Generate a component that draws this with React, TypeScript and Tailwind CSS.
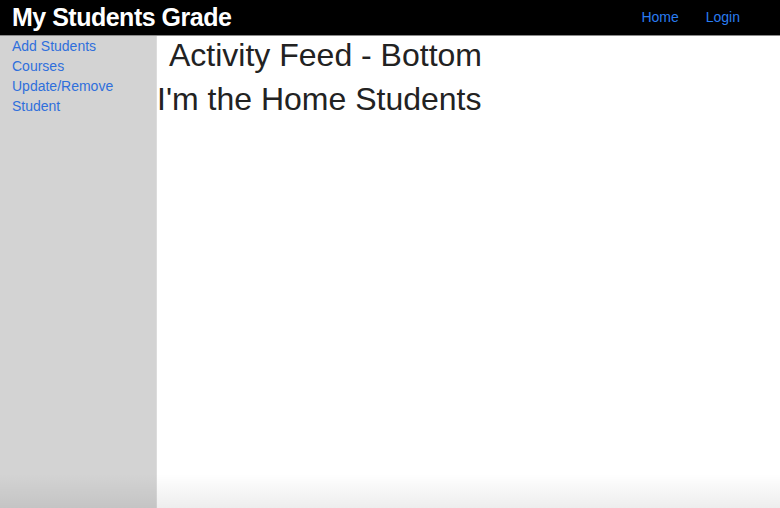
import React from "react";

export default function App() {
  const font = { fontFamily: '"Liberation Sans", Arial, sans-serif' };
  return (
    <div className="relative h-[508px] w-[780px] flex flex-col bg-white overflow-hidden" style={font}>
      <header className="h-[36px] shrink-0 bg-black border-b border-[#8a8a8a] flex items-center justify-between pl-[12px] pr-[40px]">
        <span className="text-white font-bold text-[25px] tracking-[-0.5px] leading-none">My Students Grade</span>
        <nav className="flex gap-[27px] text-[14px] text-[#2a7cf0]">
          <a href="#">Home</a>
          <a href="#">Login</a>
        </nav>
      </header>
      <div className="flex flex-1 min-h-0">
        <aside className="w-[157px] shrink-0 bg-[#d3d3d3] border-r border-[#dcdcdc] pl-[12px] flex flex-col text-[14px] leading-[20px] text-[#2f6fdc]">
          <a href="#">Add Students</a>
          <a href="#">Courses</a>
          <a href="#">Update/Remove</a>
          <a href="#">Student</a>
        </aside>
        <main className="flex-1 text-[#222222]">
          <h1 className="text-[32px] leading-[38px] pl-[12px]">Activity Feed - Bottom</h1>
          <h1 className="text-[32px] leading-[38px] mt-[6px]">I'm the Home Students</h1>
        </main>
      </div>
      <div className="pointer-events-none absolute bottom-0 left-0 right-0 h-[34px] bg-gradient-to-b from-transparent to-black/[0.07]" />
    </div>
  );
}
